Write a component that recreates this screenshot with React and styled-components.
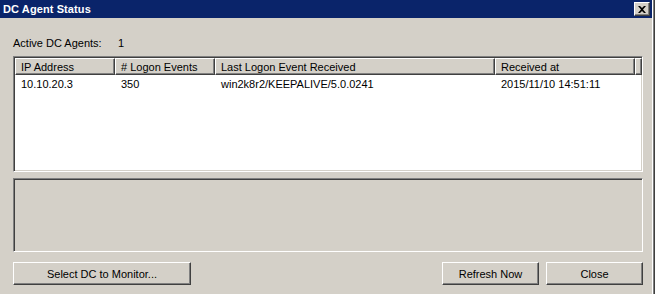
import React from 'react';
import styled, { createGlobalStyle } from 'styled-components';

const GlobalStyle = createGlobalStyle`
  html, body {
    margin: 0;
    padding: 0;
    background: #d4d0c8;
  }
  * {
    box-sizing: border-box;
  }
`;

// 窓全体
const Window = styled.div`
  width: 655px;
  height: 294px;
  background: #d4d0c8;
  border-right: 1px solid #404040;
  box-shadow: inset -1px 0 #808080, inset -2px 0 #ffffff;
  display: flex;
  flex-direction: column;
  font-family: 'Liberation Sans', Arial, sans-serif;
  font-size: 11px;
  color: #000;
  overflow: hidden;
`;

const TitleBar = styled.div`
  height: 18px;
  margin-right: 2px;
  background: #0a246a;
  display: flex;
  align-items: center;
  justify-content: space-between;
  padding: 0 2px 0 3px;
`;

const TitleText = styled.span`
  color: #fff;
  font-weight: bold;
  font-size: 11px;
  letter-spacing: 0.1px;
`;

const CaptionButton = styled.div`
  width: 16px;
  height: 14px;
  background: #d4d0c8;
  border-top: 1px solid #fff;
  border-left: 1px solid #fff;
  border-right: 1px solid #404040;
  border-bottom: 1px solid #404040;
  box-shadow: inset -1px -1px #808080;
  display: flex;
  align-items: center;
  justify-content: center;
`;

const Body = styled.div`
  flex: 1;
  display: flex;
  flex-direction: column;
  padding: 17px 11px 0 13px;
`;

const InfoRow = styled.div`
  display: flex;
  height: 16px;
  align-items: center;
  margin-bottom: 5px;
`;

const InfoLabel = styled.span`
  width: 105px;
`;

// 沈んだ枠
const Sunken = styled.div`
  height: ${p => p.$h}px;
  background: ${p => (p.$white ? '#fff' : '#d4d0c8')};
  border-top: 1px solid #808080;
  border-left: 1px solid #808080;
  border-right: 1px solid #fff;
  border-bottom: 1px solid #fff;
  box-shadow: inset 1px 1px #404040, inset -1px -1px #d4d0c8;
  padding: 1px;
  margin-bottom: ${p => p.$mb || 0}px;
  overflow: hidden;
`;

const Row = styled.div`
  display: flex;
  height: ${p => (p.$header ? 17 : 16)}px;
  align-items: center;
  margin-top: ${p => (p.$header ? 0 : 1)}px;
`;

const HeadCell = styled.div`
  width: ${p => p.$w}px;
  height: 17px;
  flex: none;
  background: #d4d0c8;
  border-top: 1px solid #fff;
  border-left: 1px solid #fff;
  border-right: 1px solid #404040;
  border-bottom: 1px solid #404040;
  box-shadow: inset -1px -1px #808080;
  padding-left: 5px;
  display: flex;
  align-items: center;
  white-space: nowrap;
`;

const Cell = styled.div`
  width: ${p => p.$w}px;
  flex: none;
  padding-left: 6px;
  white-space: nowrap;
`;

const ButtonRow = styled.div`
  display: flex;
  gap: 7px;
`;

const Button = styled.div`
  width: ${p => p.$w}px;
  height: 23px;
  margin-right: ${p => p.$push ? 'auto' : '0'};
  background: #d4d0c8;
  border-top: 1px solid #fff;
  border-left: 1px solid #fff;
  border-right: 1px solid #404040;
  border-bottom: 1px solid #404040;
  box-shadow: inset -1px -1px #808080;
  display: flex;
  align-items: center;
  justify-content: center;
`;

const columns = [
  { title: 'IP Address', w: 100 },
  { title: '# Logon Events', w: 100 },
  { title: 'Last Logon Event Received', w: 280 },
  { title: 'Received at', w: 140 },
];

const rows = [['10.10.20.3', '350', 'win2k8r2/KEEPALIVE/5.0.0241', '2015/11/10 14:51:11']];

export default function App() {
  return (
    <>
      <GlobalStyle />
      <Window>
        <TitleBar>
          <TitleText>DC Agent Status</TitleText>
          <CaptionButton>
            <svg width="8" height="7" viewBox="0 0 8 7">
              <path d="M0 0h2l2 2 2-2h2L5 3.5 8 7H6L4 5 2 7H0l3-3.5z" fill="#000" />
            </svg>
          </CaptionButton>
        </TitleBar>
        <Body>
          <InfoRow>
            <InfoLabel>Active DC Agents:</InfoLabel>
            <span>1</span>
          </InfoRow>
          <Sunken $h={116} $white $mb={6}>
            <Row $header>
              {columns.map(c => (
                <HeadCell key={c.title} $w={c.w}>{c.title}</HeadCell>
              ))}
              <HeadCell $w={4} />
            </Row>
            {rows.map((r, i) => (
              <Row key={i}>
                {r.map((v, j) => (
                  <Cell key={j} $w={columns[j].w}>{v}</Cell>
                ))}
              </Row>
            ))}
          </Sunken>
          <Sunken $h={74} $mb={10} />
          <ButtonRow>
            <Button $w={178} $push>Select DC to Monitor...</Button>
            <Button $w={97}>Refresh Now</Button>
            <Button $w={97}>Close</Button>
          </ButtonRow>
        </Body>
      </Window>
    </>
  );
}
